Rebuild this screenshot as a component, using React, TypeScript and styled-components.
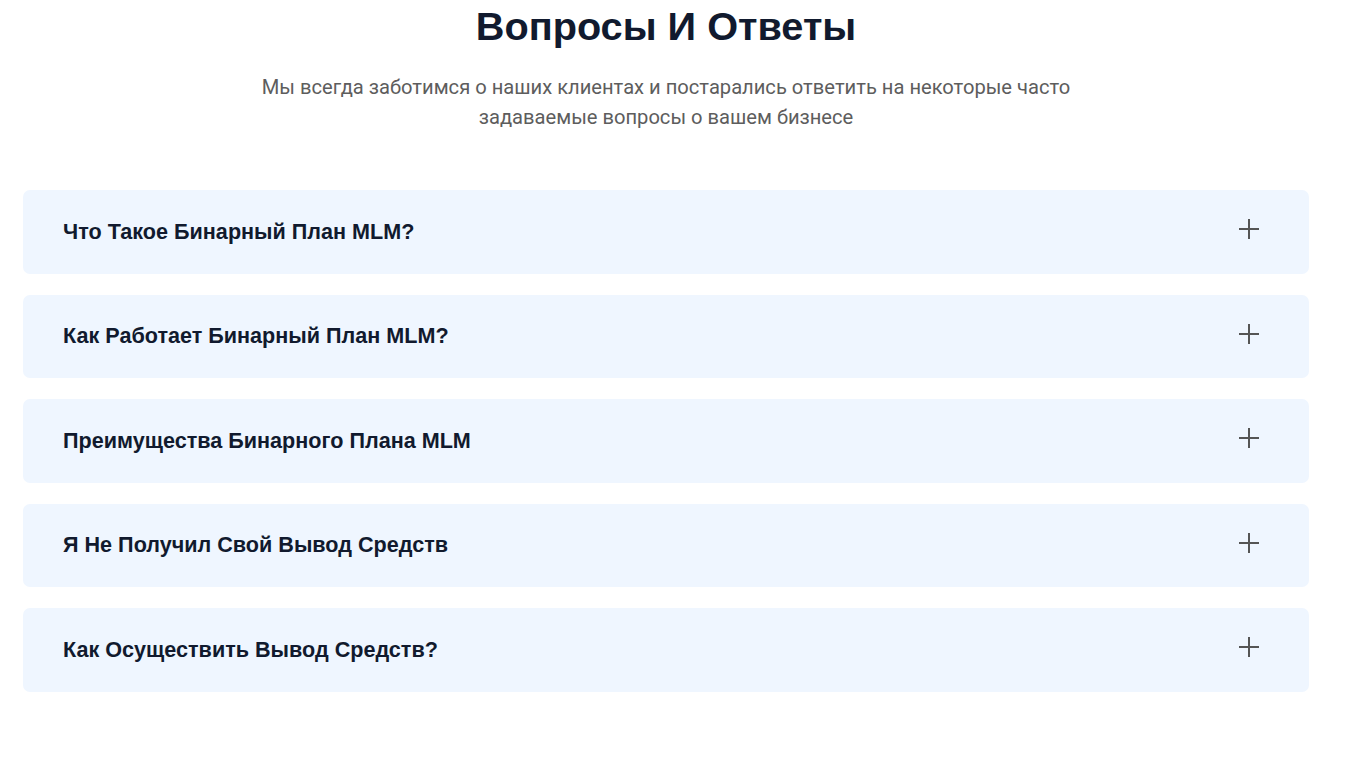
import React from "react";
import styled, { createGlobalStyle } from "styled-components";

const GlobalStyle = createGlobalStyle`
  html, body { margin: 0; padding: 0; background: #ffffff; }
  body { font-family: "Liberation Sans", Arial, sans-serif; }
  * { box-sizing: border-box; }
`;

const Section = styled.section`
  width: 1370px;
  padding: 2px 0 0 23px;
`;

const Container = styled.div`
  width: 1286px;
  display: flex;
  flex-direction: column;
  align-items: center;
`;

const Title = styled.h2`
  margin: 0;
  font-family: "Liberation Sans", Arial, sans-serif;
  font-weight: 700;
  font-size: 39.7px;
  line-height: 48px;
  color: #111a2e;
  text-align: center;
`;

const Subtitle = styled.p`
  margin: 22px 0 0;
  max-width: 840px;
  font-family: Roboto, "Liberation Sans", sans-serif;
  font-size: 20.15px;
  line-height: 30px;
  color: #5d5d5d;
  text-align: center;
`;

const List = styled.div`
  margin-top: 58px;
  width: 100%;
  display: flex;
  flex-direction: column;
  gap: 21px;
`;

const Item = styled.div`
  height: 83.5px;
  background: #eff6ff;
  border-radius: 7px;
  display: flex;
  align-items: center;
  justify-content: space-between;
  padding: 0 50px 0 40px;
`;

const Question = styled.h3`
  margin: 0;
  font-family: "Liberation Sans", Arial, sans-serif;
  font-weight: 700;
  font-size: 21.6px;
  line-height: 26px;
  color: #111a2e;
`;

const PlusIcon = styled.svg`
  width: 20px;
  height: 20px;
  margin-top: -5px;
  flex-shrink: 0;
`;

const questions = [
  "Что Такое Бинарный План MLM?",
  "Как Работает Бинарный План MLM?",
  "Преимущества Бинарного Плана MLM",
  "Я Не Получил Свой Вывод Средств",
  "Как Осуществить Вывод Средств?",
];

const Plus = () => (
  <PlusIcon viewBox="0 0 20 20" aria-hidden="true">
    <path d="M10 0V20M0 10H20" stroke="#555555" strokeWidth="2" fill="none" />
  </PlusIcon>
);

export default function App() {
  return (
    <>
      <GlobalStyle />
      <Section>
        <Container>
          <Title>Вопросы И Ответы</Title>
          <Subtitle>
            Мы всегда заботимся о наших клиентах и постарались ответить на некоторые часто
            задаваемые вопросы о вашем бизнесе
          </Subtitle>
          <List>
            {questions.map((q) => (
              <Item key={q}>
                <Question>{q}</Question>
                <Plus />
              </Item>
            ))}
          </List>
        </Container>
      </Section>
    </>
  );
}
